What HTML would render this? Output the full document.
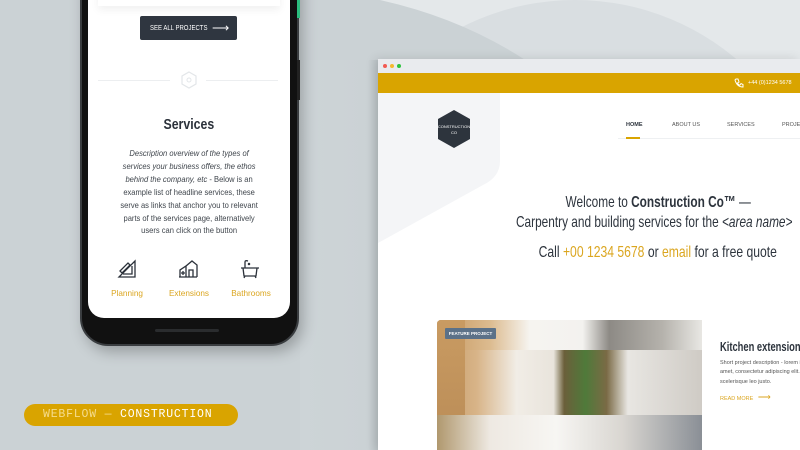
<!DOCTYPE html>
<html><head><style>
*{margin:0;padding:0;box-sizing:border-box}
body{width:800px;height:450px;overflow:hidden;position:relative;background:#e4e8ea;font-family:"Liberation Sans",sans-serif}
.abs{position:absolute}
.t{position:absolute;white-space:nowrap}
.n{display:inline-block;transform:scaleX(.8)}
</style></head><body>
<svg class="abs" style="left:0;top:0" width="800" height="450">
<defs><linearGradient id="g" x1="0" x2="1"><stop offset="0" stop-color="#cdd4d7"/><stop offset=".85" stop-color="#cbd2d5"/><stop offset="1" stop-color="#b8c0c3"/></linearGradient></defs>
<rect width="800" height="450" fill="#e4e8ea"/>
<circle cx="575" cy="250" r="250" fill="#d9dee1"/>
<path d="M0 0 L380 0 Q470 20 540 70 L540 450 L0 450 Z" fill="#cbd2d5"/>
<rect x="300" y="60" width="80" height="390" fill="url(#g)"/>
</svg>
<!-- phone -->
<div class="abs" style="left:80px;top:-40px;width:219px;height:386px;background:#111;border-radius:28px;border:2px solid #3a3d40;box-shadow:4px 6px 14px rgba(0,0,0,.25)"></div>
<div class="abs" style="left:297px;top:0;width:3px;height:18px;background:#2bbd7e"></div>
<div class="abs" style="left:297px;top:60px;width:3px;height:40px;background:#222"></div>
<div class="abs" style="left:88px;top:-20px;width:202px;height:338px;background:#fff;border-radius:16px;overflow:hidden">
 <div class="abs" style="left:10px;top:0;width:182px;height:26px;box-shadow:0 4px 8px rgba(0,0,0,.06)"></div>
 <div class="abs" style="left:52px;top:36px;width:97px;height:24px;background:#2f3640;border-radius:2px;color:#fff;font-size:7.5px;line-height:24px;padding-left:10px;white-space:nowrap"><span class="n" style="transform-origin:left">SEE ALL PROJECTS</span><span style="position:absolute;left:72px;font-size:12px">⟶</span></div>
 <div class="abs" style="left:10px;top:100px;width:72px;height:1px;background:#eceef0"></div>
 <div class="abs" style="left:118px;top:100px;width:72px;height:1px;background:#eceef0"></div>
 <svg class="abs" style="left:92px;top:91px" width="18" height="18"><polygon points="9,1 16,5 16,13 9,17 2,13 2,5" fill="none" stroke="#e3e6e9" stroke-width="1.2"/><circle cx="9" cy="9" r="2" fill="none" stroke="#e3e6e9"/></svg>
 <div class="t" style="left:0;width:202px;text-align:center;top:137px;font-size:14.5px;font-weight:bold;color:#2b313a"><span class="n" style="transform:scaleX(.85)">Services</span></div>
 <div class="abs" style="left:0;width:202px;top:167px;text-align:center;font-size:8.6px;line-height:12.9px;color:#3f454c;white-space:nowrap"><span class="n" style="transform:scaleX(.88)"><i>Description overview of the types of<br>services your business offers, the ethos<br>behind the company, etc</i> - Below is an<br>example list of headline services, these<br>serve as links that anchor you to relevant<br>parts of the services page, alternatively<br>users can click on the button</span></div>
 <svg class="abs" style="left:29px;top:279px" width="20" height="20" fill="none" stroke="#2b313a" stroke-width="1.3"><path d="M2 18 L18 2 L18 18 Z M6 15 L15 15 L15 7"/><path d="M3 12 L11 4 L13 6 L5 14 Z"/></svg>
 <svg class="abs" style="left:90px;top:279px" width="20" height="20" fill="none" stroke="#2b313a" stroke-width="1.3"><path d="M1 18 L19 18 M2 18 L2 11 L8 7 L8 18 M8 7 L14 2 L19 6 L19 18 M11 18 L11 11 L15 11 L15 18 M3 14 L7 14 M5 12 L5 16"/></svg>
 <svg class="abs" style="left:152px;top:279px" width="20" height="20" fill="none" stroke="#2b313a" stroke-width="1.3"><path d="M1 9 L19 9 M3 9 L4 17 L16 17 L17 9 M5 17 L4 19 M15 17 L16 19 M5 9 L5 3 Q5 1 8 2"/><circle cx="9" cy="5" r=".6"/></svg>
 <div class="t" style="left:8px;width:62px;text-align:center;top:309px;font-size:8.2px;color:#dba620">Planning</div>
 <div class="t" style="left:70px;width:62px;text-align:center;top:309px;font-size:8.2px;color:#dba620">Extensions</div>
 <div class="t" style="left:132px;width:62px;text-align:center;top:309px;font-size:8.2px;color:#dba620">Bathrooms</div>
</div>
<div class="abs" style="left:155px;top:329px;width:64px;height:3px;border-radius:2px;background:#2a2c2e"></div>
<!-- pill -->
<div class="abs" style="left:24px;top:404px;width:214px;height:22px;border-radius:11px;background:#d9a400;font-family:'Liberation Mono',monospace;font-size:11.5px;line-height:22px;padding-left:19px;letter-spacing:.8px;white-space:nowrap"><span style="color:#f5dc8e">WEBFLOW — </span><span style="color:#fff">CONSTRUCTION</span></div>
<!-- browser -->
<div class="abs" style="left:378px;top:59px;width:422px;height:391px;background:#fff;box-shadow:-3px 0 10px rgba(0,0,0,.12);overflow:hidden">
 <div class="abs" style="left:0;top:0;width:422px;height:14px;background:#e9ebee"></div>
 <div class="abs" style="left:5px;top:5px;width:4px;height:4px;border-radius:2px;background:#f25a52"></div>
 <div class="abs" style="left:12px;top:5px;width:4px;height:4px;border-radius:2px;background:#f4b92f"></div>
 <div class="abs" style="left:19px;top:5px;width:4px;height:4px;border-radius:2px;background:#2dc33e"></div>
 <div class="abs" style="left:0;top:14px;width:422px;height:20px;background:#d9a400"></div>
 <svg class="abs" style="left:356px;top:19px" width="10" height="10" fill="none" stroke="#fff" stroke-width="1"><path d="M2 1 L4 1 L5 4 L3.5 5 Q5 7.5 6 7 L7 5.5 L9 6.5 L9 9 Q3 9 1 2 Z"/></svg>
 <div class="t" style="left:370px;top:21px;font-size:5.5px;color:#fff">+44 (0)1234 5678</div>
 <svg class="abs" style="left:0;top:34px" width="130" height="160"><path d="M0 0 L122 0 L122 68 Q122 84 105 92 L0 150 Z" fill="#f4f5f7"/></svg>
 <svg class="abs" style="left:59px;top:50px" width="34" height="40"><polygon points="17,1 33,10 33,30 17,39 1,30 1,10" fill="#2d343d"/><text x="17" y="19" font-size="4" fill="#fff" text-anchor="middle" font-family="Liberation Sans">CONSTRUCTION</text><text x="17" y="25" font-size="4" fill="#fff" text-anchor="middle" font-family="Liberation Sans">CO</text></svg>
 <div class="abs" style="left:240px;top:79px;width:182px;height:1px;background:#eef0f2"></div>
 <div class="abs" style="left:248px;top:78px;width:14px;height:2px;background:#d9a400"></div>
 <div class="t" style="left:248px;top:63px;font-size:5.5px;color:#2d343d;font-weight:bold">HOME</div>
 <div class="t" style="left:294px;top:63px;font-size:5.5px;color:#555">ABOUT US</div>
 <div class="t" style="left:349px;top:63px;font-size:5.5px;color:#555">SERVICES</div>
 <div class="t" style="left:404px;top:63px;font-size:5.5px;color:#555">PROJECTS</div>
 <div class="t" style="left:60px;width:440px;text-align:center;top:135px;font-size:16px;color:#2d343d"><span class="n" style="transform:scaleX(.74)">Welcome to <b>Construction Co™</b> —</span></div>
 <div class="t" style="left:138px;top:155px;font-size:16px;color:#2d343d"><span class="n" style="transform:scaleX(.74);transform-origin:left">Carpentry and building services for the <i>&lt;area name&gt;</i></span></div>
 <div class="t" style="left:60px;width:440px;text-align:center;top:185px;font-size:16px;color:#2d343d"><span class="n" style="transform:scaleX(.76)">Call <span style="color:#dba620">+00 1234 5678</span> or <span style="color:#dba620">email</span> for a free quote</span></div>
 <div class="abs" style="left:59px;top:261px;width:265px;height:140px;border-radius:4px 0 0 0;overflow:hidden;background:linear-gradient(90deg,#c49a67 0%,#d8b488 15%,#f1ede6 30%,#e9e4dc 44%,#6b5f3a 48%,#4f7a3a 56%,#7a6a45 64%,#e8e6e2 72%,#cfcbc5 100%)">
  <div class="abs" style="left:0;top:0;width:265px;height:30px;background:linear-gradient(90deg,#c6975f 0%,#dcbb8f 20%,#f6f4f0 35%,#f3f2ef 55%,#8d8a85 65%,#b5b2ac 85%,#e8e7e3 100%)"></div>
  <div class="abs" style="left:0;top:0;width:28px;height:140px;background:linear-gradient(180deg,#c99b62,#b88a55)"></div>
  <div class="abs" style="left:0;top:95px;width:265px;height:45px;background:linear-gradient(90deg,#b0986e 0%,#eee9e2 20%,#f7f6f3 45%,#d9d6d1 70%,#8a8f96 100%)"></div>
  <div class="abs" style="left:8px;top:8px;width:51px;height:11px;background:#5b7188;border-radius:1px;color:#fff;font-size:4.5px;font-weight:bold;line-height:11px;text-align:center">FEATURE PROJECT</div>
 </div>
 <div class="t" style="left:342px;top:280px;font-size:13px;font-weight:bold;color:#2d343d"><span class="n" style="transform:scaleX(.72);transform-origin:left">Kitchen extension,</span></div>
 <div class="abs" style="left:342px;top:300px;width:90px;font-size:5.5px;line-height:9.3px;color:#555;white-space:nowrap">Short project description - lorem ipsum<br>amet, consectetur adipiscing elit.<br>scelerisque leo justo.</div>
 <div class="t" style="left:342px;top:333px;font-size:5.5px;color:#dba620">READ MORE <span style="font-size:9px;margin-left:3px">⟶</span></div>
</div>
</body></html>
